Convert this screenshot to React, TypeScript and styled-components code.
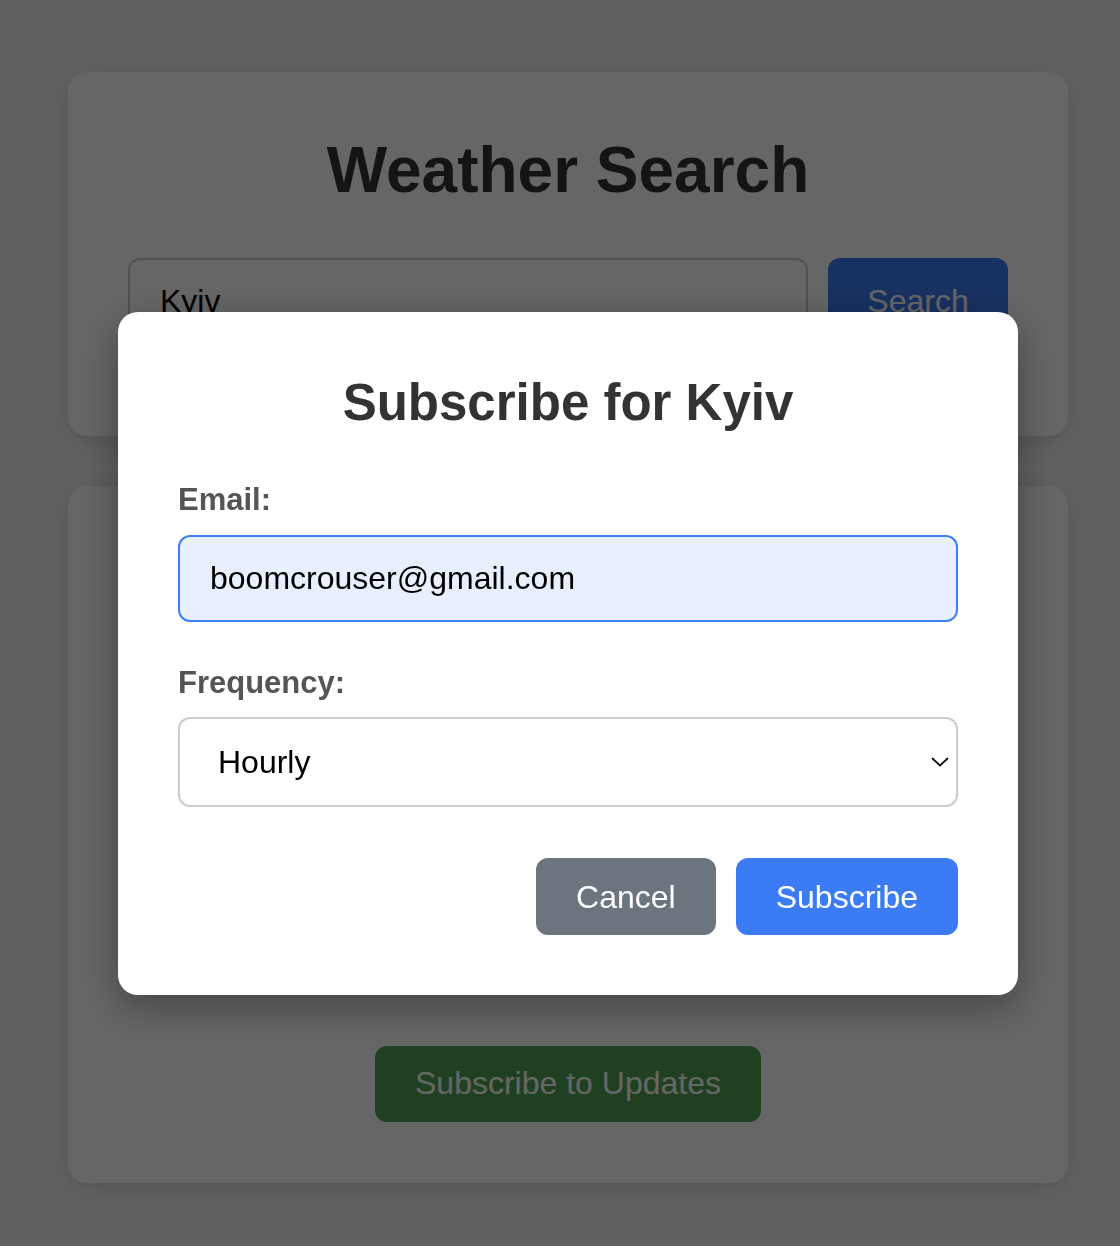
import React from "react";
import styled, { createGlobalStyle } from "styled-components";

const GlobalStyle = createGlobalStyle`
  * { box-sizing: border-box; }
  html, body { margin: 0; padding: 0; }
  body {
    background: #f0f2f5;
    font-family: "Liberation Sans", Arial, Helvetica, sans-serif;
    color: #333;
  }
`;

const Page = styled.div`
  padding: 72px 52px 60px 68px;
  display: flex;
  flex-direction: column;
  gap: 50px;
`;

const Card = styled.section<{ $padBottom?: number }>`
  width: 1000px;
  background: #fff;
  border-radius: 20px;
  box-shadow: 0 6px 24px rgba(0, 0, 0, 0.12);
  padding: 62px 60px ${(p) => p.$padBottom ?? 60}px;
  display: flex;
  flex-direction: column;
`;

const Title = styled.h1`
  margin: 0 0 50px;
  font-size: 64px;
  line-height: 1.15;
  font-weight: 700;
  text-align: center;
  color: #333;
`;

const SearchForm = styled.form`
  display: flex;
  gap: 20px;
  margin-bottom: 31px;
`;

const TextInput = styled.input<{ $focused?: boolean }>`
  display: block;
  width: 100%;
  height: 87px;
  padding: 0 30px;
  font-family: inherit;
  font-size: 32px;
  color: #000;
  border: 2px solid ${(p) => (p.$focused ? "#3b82f6" : "#ccc")};
  background: ${(p) => (p.$focused ? "#e8f0fe" : "#fff")};
  border-radius: 12px;
  outline: none;
`;

const SearchInput = styled(TextInput)`
  flex: 1;
  width: auto;
  min-width: 0;
`;

const Button = styled.button<{ $variant: "primary" | "secondary" | "success" }>`
  font-family: inherit;
  font-size: 32px;
  line-height: 1.15;
  color: #fff;
  border: none;
  border-radius: 12px;
  padding: 0 40px;
  cursor: pointer;
  background: ${(p) =>
    p.$variant === "primary" ? "#3b7cf5" : p.$variant === "secondary" ? "#6c757d" : "#52a055"};
`;

const SearchButton = styled(Button)`
  height: 87px;
  width: 180px;
  padding: 0;
`;

const WeatherPanel = styled.div`
  height: 468px;
  margin-bottom: 30px;
  display: flex;
  flex-direction: column;
  align-items: center;
  gap: 16px;
  padding-top: 20px;
`;

const CityName = styled.h2`
  margin: 0;
  font-size: 40px;
  color: #333;
`;

const Stat = styled.p`
  margin: 0;
  font-size: 28px;
  color: #555;
`;

const CenterRow = styled.div`
  display: flex;
  justify-content: center;
`;

const UpdatesButton = styled(Button)`
  height: 76px;
`;

const Overlay = styled.div`
  position: fixed;
  inset: 0;
  background: rgba(0, 0, 0, 0.6);
  display: flex;
  align-items: center;
  justify-content: center;
  padding: 61px 0 0 16px;
`;

const Modal = styled.div`
  width: 900px;
  background: #fff;
  border-radius: 20px;
  padding: 62px 60px 60px;
  box-shadow: 0 12px 40px rgba(0, 0, 0, 0.35);
  display: flex;
  flex-direction: column;
`;

const ModalTitle = styled.h2`
  margin: 0 0 50px;
  font-size: 51px;
  line-height: 1.15;
  font-weight: 700;
  text-align: center;
  color: #333;
`;

const Field = styled.div`
  display: flex;
  flex-direction: column;
  gap: 17px;
  margin-bottom: 43px;
`;

const Label = styled.label`
  font-size: 31px;
  line-height: 1.15;
  font-weight: 700;
  color: #555;
`;

const SelectWrap = styled.div`
  position: relative;
`;

const Select = styled.select`
  display: block;
  width: 100%;
  height: 90px;
  appearance: none;
  -webkit-appearance: none;
  padding: 0 60px 0 38px;
  font-family: inherit;
  font-size: 32px;
  color: #000;
  background: #fff;
  border: 2px solid #ccc;
  border-radius: 12px;
  outline: none;
`;

const Chevron = styled.svg`
  position: absolute;
  right: 9px;
  top: 50%;
  transform: translateY(-50%);
  pointer-events: none;
`;

const Actions = styled.div`
  display: flex;
  justify-content: flex-end;
  gap: 20px;
  margin-top: 8px;
`;

const ActionButton = styled(Button)`
  height: 77px;
`;

export default function App() {
  return (
    <>
      <GlobalStyle />
      <Page>
        <Card>
          <Title>Weather Search</Title>
          <SearchForm onSubmit={(e) => e.preventDefault()}>
            <SearchInput defaultValue="Kyiv" />
            <SearchButton type="submit" $variant="primary">Search</SearchButton>
          </SearchForm>
        </Card>
        <Card $padBottom={61}>
          <WeatherPanel>
            <CityName>Kyiv</CityName>
            <Stat>Temperature: 18°C</Stat>
            <Stat>Humidity: 62%</Stat>
            <Stat>Partly cloudy</Stat>
          </WeatherPanel>
          <CenterRow>
            <UpdatesButton $variant="success">Subscribe to Updates</UpdatesButton>
          </CenterRow>
        </Card>
      </Page>
      <Overlay>
        <Modal>
          <ModalTitle>Subscribe for Kyiv</ModalTitle>
          <Field>
            <Label htmlFor="email">Email:</Label>
            <TextInput id="email" $focused defaultValue="boomcrouser@gmail.com" />
          </Field>
          <Field>
            <Label htmlFor="freq">Frequency:</Label>
            <SelectWrap>
              <Select id="freq" defaultValue="hourly">
                <option value="hourly">Hourly</option>
                <option value="daily">Daily</option>
              </Select>
              <Chevron width="18" height="10" viewBox="0 0 18 10" fill="none">
                <path d="M1.5 1.5 L9 8.5 L16.5 1.5" stroke="#111" strokeWidth="1.8" strokeLinecap="round" strokeLinejoin="round" />
              </Chevron>
            </SelectWrap>
          </Field>
          <Actions>
            <ActionButton $variant="secondary">Cancel</ActionButton>
            <ActionButton $variant="primary">Subscribe</ActionButton>
          </Actions>
        </Modal>
      </Overlay>
    </>
  );
}
